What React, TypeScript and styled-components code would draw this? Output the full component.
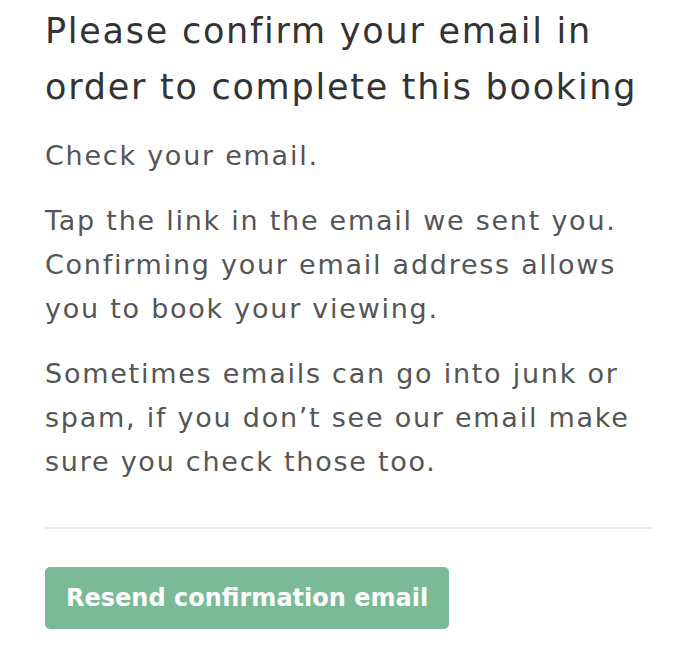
import React from "react";
import styled, { createGlobalStyle } from "styled-components";

const Global = createGlobalStyle`
  html, body { margin: 0; padding: 0; background: #ffffff; }
  body { font-family: "DejaVu Sans", "Open Sans", sans-serif; -webkit-font-smoothing: antialiased; }
`;

const Page = styled.div`
  width: 692px;
  box-sizing: border-box;
  padding: 3px 40px 0 45px;
  display: flex;
  flex-direction: column;
`;

const Title = styled.h1`
  margin: 0;
  font-size: 35px;
  line-height: 56px;
  letter-spacing: 1.75px;
  font-weight: 400;
  color: #333333;
`;

const Body = styled.div`
  margin-top: 19px;
  display: flex;
  flex-direction: column;
  gap: 21px;
`;

const Para = styled.p`
  margin: 0;
  font-size: 27px;
  line-height: 44px;
  letter-spacing: 1.75px;
  color: #555555;
`;

const Divider = styled.hr`
  margin: 43px 0 0;
  border: none;
  border-top: 2px solid #eeeeee;
`;

const Button = styled.button`
  margin-top: 38px;
  align-self: flex-start;
  height: 62px;
  padding: 0 21px;
  border: none;
  border-radius: 5px;
  background: #7bba97;
  color: #ffffff;
  font-family: inherit;
  font-size: 24px;
  font-weight: 700;
  cursor: pointer;
`;

export default function App() {
  return (
    <>
      <Global />
      <Page>
        <Title>
          Please confirm your email in
          <br />
          order to complete this booking
        </Title>
        <Body>
          <Para>Check your email.</Para>
          <Para>
            Tap the link in the email we sent you.
            <br />
            Confirming your email address allows
            <br />
            you to book your viewing.
          </Para>
          <Para>
            Sometimes emails can go into junk or
            <br />
            spam, if you don’t see our email make
            <br />
            sure you check those too.
          </Para>
        </Body>
        <Divider />
        <Button>Resend confirmation email</Button>
      </Page>
    </>
  );
}
